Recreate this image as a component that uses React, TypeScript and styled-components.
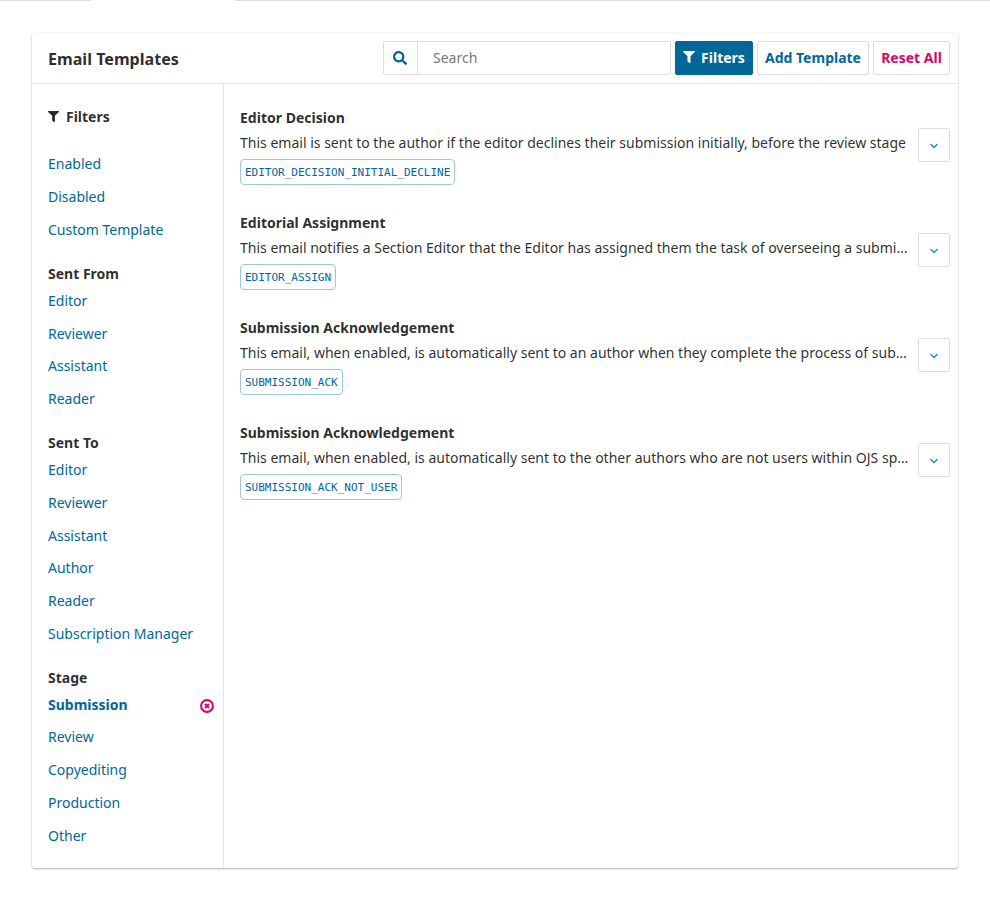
import React from "react";
import styled, { createGlobalStyle } from "styled-components";
import { FaFilter, FaSearch } from "react-icons/fa";

const Global = createGlobalStyle`
  html, body { margin: 0; padding: 0; background: #fff; }
  body { font-family: "Noto Sans", sans-serif; font-size: 14px; color: rgba(0, 0, 0, 0.84); }
  * { box-sizing: border-box; }
`;

const Strip = styled.div`
  display: flex;
  height: 1px;
  background: #ddd;
`;
const StripGap = styled.div`
  width: 144px;
  margin-left: 91px;
  background: #fff;
`;

const Page = styled.div`
  padding: 32px;
`;

const Card = styled.section`
  width: 926px;
  height: 835px;
  background: #fff;
  border-radius: 2px;
  box-shadow: 0 1px 2px rgba(0, 0, 0, 0.3), 0 0 1px rgba(0, 0, 0, 0.12);
  display: flex;
  flex-direction: column;
`;

const Header = styled.header`
  flex: none;
  display: flex;
  align-items: center;
  justify-content: space-between;
  height: 51px;
  padding: 0 8px 0 16px;
  border-bottom: 1px solid #e5e5e5;
`;

const Title = styled.h2`
  margin: 0;
  font-size: 16.1px;
  line-height: 20px;
  font-weight: 700;
  position: relative;
  top: 1px;
`;

const Tools = styled.div`
  display: flex;
  gap: 4px;
`;

const SearchBox = styled.div`
  display: flex;
  width: 288px;
  height: 34px;
  border: 1px solid #ddd;
  border-radius: 2px;
`;
const SearchIcon = styled.div`
  width: 34px;
  padding-right: 1px;
  display: flex;
  align-items: center;
  justify-content: center;
  border-right: 1px solid #ddd;
  color: #006798;
  font-size: 14px;
`;
const SearchInput = styled.div`
  padding-left: 15px;
  line-height: 32px;
  color: #777;
`;

const Button = styled.button<{ $w: number; $tone: "primary" | "default" | "danger" }>`
  width: ${(p) => p.$w}px;
  height: 34px;
  padding: 0 0 2px;
  display: inline-flex;
  align-items: center;
  justify-content: center;
  gap: 6px;
  font-family: inherit;
  font-size: 14px;
  font-weight: 700;
  border-radius: 2px;
  border: 1px solid ${(p) => (p.$tone === "primary" ? "#006798" : "#ddd")};
  background: ${(p) => (p.$tone === "primary" ? "#006798" : "#fff")};
  color: ${(p) => (p.$tone === "primary" ? "#fff" : p.$tone === "danger" ? "#d00a6c" : "#006798")};
  svg { font-size: 12px; }
`;

const Body = styled.div`
  flex: 1;
  min-height: 0;
  display: flex;
`;

const Sidebar = styled.aside`
  width: 192px;
  padding: 22px 0 0 16px;
  border-right: 1px solid #e5e5e5;
`;

const FilterHead = styled.div`
  display: flex;
  align-items: center;
  gap: 7px;
  height: 20px;
  font-weight: 700;
  margin-bottom: 22.4px;
  svg { font-size: 11px; }
`;

const Group = styled.div`
  margin-bottom: 17.6px;
`;
const GroupTitle = styled.div`
  height: 20.6px;
  line-height: 20px;
  font-weight: 700;
`;
const Item = styled.div<{ $active?: boolean }>`
  height: 32.75px;
  line-height: 32.75px;
  color: #006798;
  font-weight: ${(p) => (p.$active ? 700 : 400)};
  display: flex;
  justify-content: space-between;
  align-items: center;
  padding-right: 9px;
`;

const ClearIcon = styled.svg`
  width: 14px;
  height: 14px;
  color: #d00a6c;
  position: relative;
  top: 1px;
`;

const Main = styled.main`
  flex: 1;
  min-width: 0;
  padding: 24px 8px 0 16px;
  display: flex;
  flex-direction: column;
  gap: 26px;
`;

const Row = styled.article`
  display: flex;
  align-items: flex-start;
  gap: 9px;
  height: 79px;
`;
const RowText = styled.div`
  flex: 1;
  min-width: 0;
`;
const RowTitle = styled.div`
  font-weight: 700;
  font-size: 14.03px;
  line-height: 20px;
`;
const RowDesc = styled.div`
  line-height: 20px;
  font-size: 14.02px;
  margin-top: 5px;
  white-space: nowrap;
  overflow: hidden;
  text-overflow: ellipsis;
`;
const Chip = styled.code`
  display: inline-block;
  margin-top: 6px;
  height: 26px;
  line-height: 25px;
  padding: 0 4px;
  border: 1px solid #9cc7dc;
  border-radius: 4px;
  color: #006798;
  font-family: "DejaVu Sans Mono", monospace;
  font-size: 11px;
  vertical-align: top;
`;
const Toggle = styled.button`
  flex: none;
  width: 32px;
  height: 34px;
  margin-top: 20px;
  padding: 0;
  background: #fff;
  border: 1px solid #ddd;
  border-radius: 2px;
  color: #1d83b5;
  display: flex;
  align-items: center;
  justify-content: center;
`;
const Chevron = styled.svg`
  width: 10px;
  height: 6px;
  position: relative;
  top: 1px;
`;

const groups: { title: string; items: string[] }[] = [
  { title: "Sent From", items: ["Editor", "Reviewer", "Assistant", "Reader"] },
  { title: "Sent To", items: ["Editor", "Reviewer", "Assistant", "Author", "Reader", "Subscription Manager"] },
];

const emails = [
  ["Editor Decision", "This email is sent to the author if the editor declines their submission initially, before the review stage", "EDITOR_DECISION_INITIAL_DECLINE"],
  ["Editorial Assignment", "This email notifies a Section Editor that the Editor has assigned them the task of overseeing a submission through the editing process", "EDITOR_ASSIGN"],
  ["Submission Acknowledgement", "This email, when enabled, is automatically sent to an author when they complete the process of submitting a manuscript", "SUBMISSION_ACK"],
  ["Submission Acknowledgement", "This email, when enabled, is automatically sent to the other authors who are not users within OJS specified during the submission process", "SUBMISSION_ACK_NOT_USER"],
];

export default function App() {
  return (
    <>
      <Global />
      <Strip><StripGap /></Strip>
      <Page>
        <Card>
          <Header>
            <Title>Email Templates</Title>
            <Tools>
              <SearchBox>
                <SearchIcon><FaSearch /></SearchIcon>
                <SearchInput>Search</SearchInput>
              </SearchBox>
              <Button $w={78} $tone="primary"><FaFilter />Filters</Button>
              <Button $w={112} $tone="default">Add Template</Button>
              <Button $w={77} $tone="danger">Reset All</Button>
            </Tools>
          </Header>
          <Body>
            <Sidebar>
              <FilterHead><FaFilter />Filters</FilterHead>
              <Group>
                <Item>Enabled</Item>
                <Item>Disabled</Item>
                <Item>Custom Template</Item>
              </Group>
              {groups.map((g) => (
                <Group key={g.title}>
                  <GroupTitle>{g.title}</GroupTitle>
                  {g.items.map((i) => <Item key={i}>{i}</Item>)}
                </Group>
              ))}
              <Group>
                <GroupTitle>Stage</GroupTitle>
                <Item $active>
                  Submission
                  <ClearIcon viewBox="0 0 14 14" fill="none" stroke="currentColor">
                    <circle cx="7" cy="7" r="5.9" strokeWidth="2.1" />
                    <path d="M5 5l4 4M9 5l-4 4" strokeWidth="2.1" />
                  </ClearIcon>
                </Item>
                <Item>Review</Item>
                <Item>Copyediting</Item>
                <Item>Production</Item>
                <Item>Other</Item>
              </Group>
            </Sidebar>
            <Main>
              {emails.map(([t, d, c]) => (
                <Row key={c}>
                  <RowText>
                    <RowTitle>{t}</RowTitle>
                    <RowDesc>{d}</RowDesc>
                    <Chip>{c}</Chip>
                  </RowText>
                  <Toggle aria-label="Expand">
                    <Chevron viewBox="0 0 10 6" fill="none" stroke="currentColor" strokeWidth="1.3">
                      <path d="M1.5 1l3.5 3.5L8.5 1" />
                    </Chevron>
                  </Toggle>
                </Row>
              ))}
            </Main>
          </Body>
        </Card>
      </Page>
    </>
  );
}
